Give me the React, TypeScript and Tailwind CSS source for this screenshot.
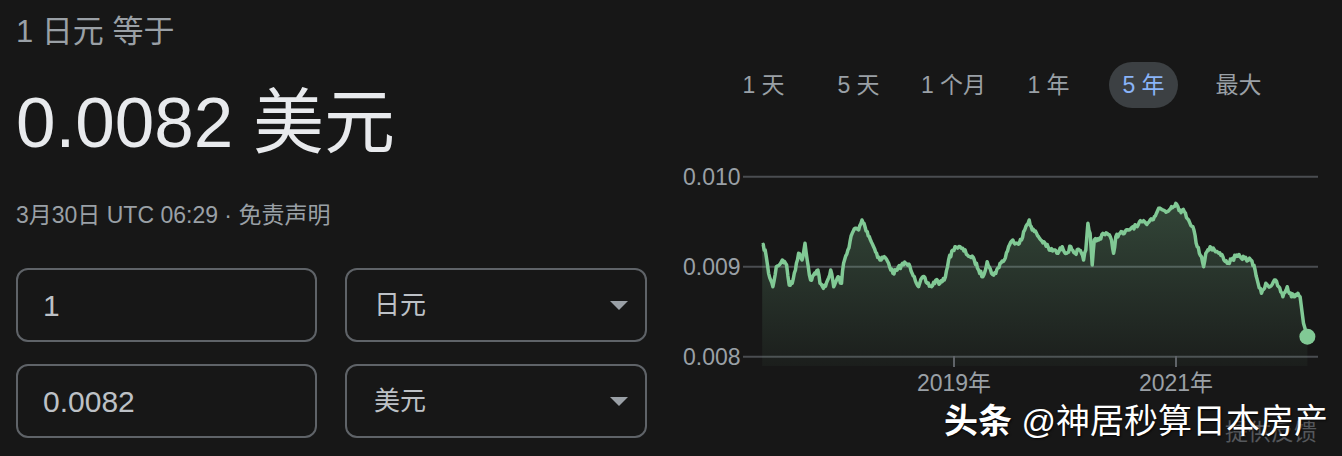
import React from "react"

const FONT = { fontFamily: '"Liberation Sans", Arial, "Noto Sans CJK SC", sans-serif' }

// rough trace of the 5y JPY/USD line, in chart pixels (x, y)
const KEYS: [number, number][] = [
  [215, 285], [222, 300], [230, 370], [240, 410], [248, 350], [258, 340], [262, 330], [272, 345],
  [278, 405], [285, 400], [295, 340], [300, 310], [308, 330], [315, 280], [320, 330], [328, 390],
  [335, 375], [345, 360], [350, 400], [358, 415], [368, 390], [375, 360], [382, 410], [392, 380],
  [400, 400], [405, 340], [415, 300], [425, 250], [432, 235], [440, 240], [448, 210], [455, 230],
  [465, 260], [475, 290], [482, 310], [490, 330], [500, 320], [510, 340], [520, 370], [530, 360],
  [540, 345], [550, 340], [560, 350], [570, 380], [580, 410], [590, 380], [600, 400], [610, 410],
  [620, 390], [630, 400], [640, 390], [650, 330], [660, 300], [665, 290], [680, 295], [700, 320],
  [710, 330], [720, 360], [730, 380], [740, 335], [750, 370], [760, 370], [770, 340], [780, 330],
  [790, 290], [800, 270], [810, 280], [820, 270], [830, 230], [838, 210], [845, 240], [855, 250],
  [865, 270], [875, 280], [885, 300], [895, 300], [905, 310], [915, 290], [925, 310], [935, 290],
  [945, 310], [955, 300], [965, 330], [970, 300], [975, 220], [980, 250], [985, 345], [990, 270],
  [1000, 270], [1010, 250], [1020, 250], [1030, 270], [1035, 310], [1040, 260], [1050, 250],
  [1060, 250], [1070, 240], [1080, 230], [1090, 230], [1100, 215], [1110, 220], [1120, 210],
  [1130, 200], [1140, 175], [1150, 180], [1160, 185], [1170, 170], [1180, 160], [1190, 180],
  [1200, 185], [1210, 210], [1220, 230], [1230, 290], [1240, 320], [1245, 350], [1250, 310],
  [1260, 290], [1270, 300], [1280, 310], [1290, 320], [1300, 340], [1310, 330], [1320, 320],
  [1330, 320], [1340, 325], [1355, 330], [1365, 360], [1372, 400], [1380, 430], [1390, 400],
  [1400, 410], [1410, 390], [1420, 410], [1430, 440], [1440, 410], [1445, 430], [1455, 440],
  [1465, 430], [1470, 440], [1478, 520], [1487, 560],
]

function buildPoints() {
  let seed = 7
  const rand = () => {
    seed = (seed * 16807) % 2147483647
    return seed / 2147483647 - 0.5
  }
  const pts: [number, number][] = []
  const map = ([x, y]: [number, number]): [number, number] => [x / 2.333 - 2, y / 3]
  for (let i = 0; i < KEYS.length - 1; i++) {
    const a = map(KEYS[i])
    const b = map(KEYS[i + 1])
    pts.push(a)
    if (i < KEYS.length - 3) {
      const steps = Math.max(1, Math.round((b[0] - a[0]) / 1.2))
      for (let s = 1; s < steps; s++) {
        const t = s / steps
        pts.push([a[0] + (b[0] - a[0]) * t, a[1] + (b[1] - a[1]) * t + rand() * 4.5])
      }
    }
  }
  pts.push(map(KEYS[KEYS.length - 1]))
  return pts
}

const PTS = buildPoints()
const LINE = PTS.map((p, i) => `${i ? "L" : "M"}${p[0].toFixed(1)},${p[1].toFixed(1)}`).join(" ")
const LAST = PTS[PTS.length - 1]
const AREA = `${LINE} L${LAST[0].toFixed(1)},216 L${PTS[0][0].toFixed(1)},216 Z`

const ranges = ["1 天", "5 天", "1 个月", "1 年", "5 年", "最大"]

function Caret() {
  return (
    <svg width="18" height="9" viewBox="0 0 18 9" className="shrink-0">
      <path d="M0 0 L18 0 L9 9 Z" fill="#9aa0a6" />
    </svg>
  )
}

function Chart() {
  return (
    <svg width="670" height="250" className="block">
      <defs>
        <linearGradient id="fill" x1="0" y1="0" x2="0" y2="1">
          <stop offset="0%" stopColor="#81c995" stopOpacity="0.26" />
          <stop offset="100%" stopColor="#81c995" stopOpacity="0.04" />
        </linearGradient>
      </defs>

      {[[26.7, "0.010"], [116.7, "0.009"], [206.7, "0.008"]].map(([y, label]) => (
        <g key={label as string}>
          <line x1="71" x2="646" y1={y} y2={y} stroke="#4a4d51" strokeWidth="2" />
          <text x="11" y={y as number} dominantBaseline="central" fontSize="23" fill="#9aa0a6" style={FONT}>
            {label}
          </text>
        </g>
      ))}

      <path d={AREA} fill="url(#fill)" />

      {[[282, "2019年"], [504, "2021年"]].map(([x, label]) => (
        <g key={label as string}>
          <line x1={x} x2={x} y1="206" y2="217" stroke="#5f6368" strokeWidth="2" />
          <text x={x as number} y="233" textAnchor="middle" dominantBaseline="central" fontSize="23" fill="#9aa0a6" style={FONT}>
            {label}
          </text>
        </g>
      ))}

      <path d={LINE} fill="none" stroke="#81c995" strokeWidth="3.5" strokeLinejoin="round" />
      <circle cx={LAST[0]} cy={LAST[1]} r="8" fill="#81c995" />
    </svg>
  )
}

export default function App() {
  return (
    <div className="relative flex w-[1342px] h-[456px] overflow-hidden bg-[#171717]" style={FONT}>

      {/* converter */}
      <div className="w-[647px] shrink-0 pl-4">
        <div className="mt-[14px] text-[31px] leading-[36px] text-[#9aa0a6]">1 日元 等于</div>
        <div className="mt-[33px] text-[71px] leading-[80px] text-[#e8eaed]">0.0082 美元</div>
        <div className="mt-[37px] text-[23px] leading-[30px] text-[#9aa0a6]">3月30日 UTC 06:29 · 免责声明</div>

        <div className="mt-[38px] flex flex-col gap-[22px]">
          {[["1", "日元"], ["0.0082", "美元"]].map(([amount, cur]) => (
            <div key={cur} className="flex gap-[28px]">
              <div className="w-[301px] h-[74px] flex items-center pl-[25px] rounded-xl border-2 border-[#5f6368] text-[30px] text-[#bdc1c6]">
                {amount}
              </div>
              <div className="flex-1 h-[74px] flex items-center justify-between pl-[27px] pr-[17px] rounded-xl border-2 border-[#5f6368] text-[26px] text-[#bdc1c6]">
                <span>{cur}</span>
                <Caret />
              </div>
            </div>
          ))}
        </div>
      </div>

      {/* chart */}
      <div className="ml-[25px] flex-1">
        <div className="mt-[62px] pl-[44px] flex">
          {ranges.map((r) => (
            <div key={r} className="w-[95px] flex justify-center">
              <span
                className={
                  r === "5 年"
                    ? "h-[46px] px-[13px] flex items-center rounded-full bg-[#3c4043] text-[23px] text-[#8ab4f8]"
                    : "h-[46px] px-[13px] flex items-center text-[23px] text-[#9aa0a6]"
                }
              >
                {r}
              </span>
            </div>
          ))}
        </div>

        <div className="mt-[42px]">
          <Chart />
        </div>
        <div className="mt-[17px] pr-[25px] text-right text-[23px] leading-[30px] text-[#55585c]">提供反馈</div>
      </div>

      {/* watermark */}
      <div
        className="absolute left-[944px] top-[401px] text-[34px] leading-[40px] text-white whitespace-nowrap"
        style={{ textShadow: "1px 1px 2px rgba(0,0,0,0.8)" }}
      >
        <span className="font-bold">头条</span> @神居秒算日本房产
      </div>
    </div>
  )
}
